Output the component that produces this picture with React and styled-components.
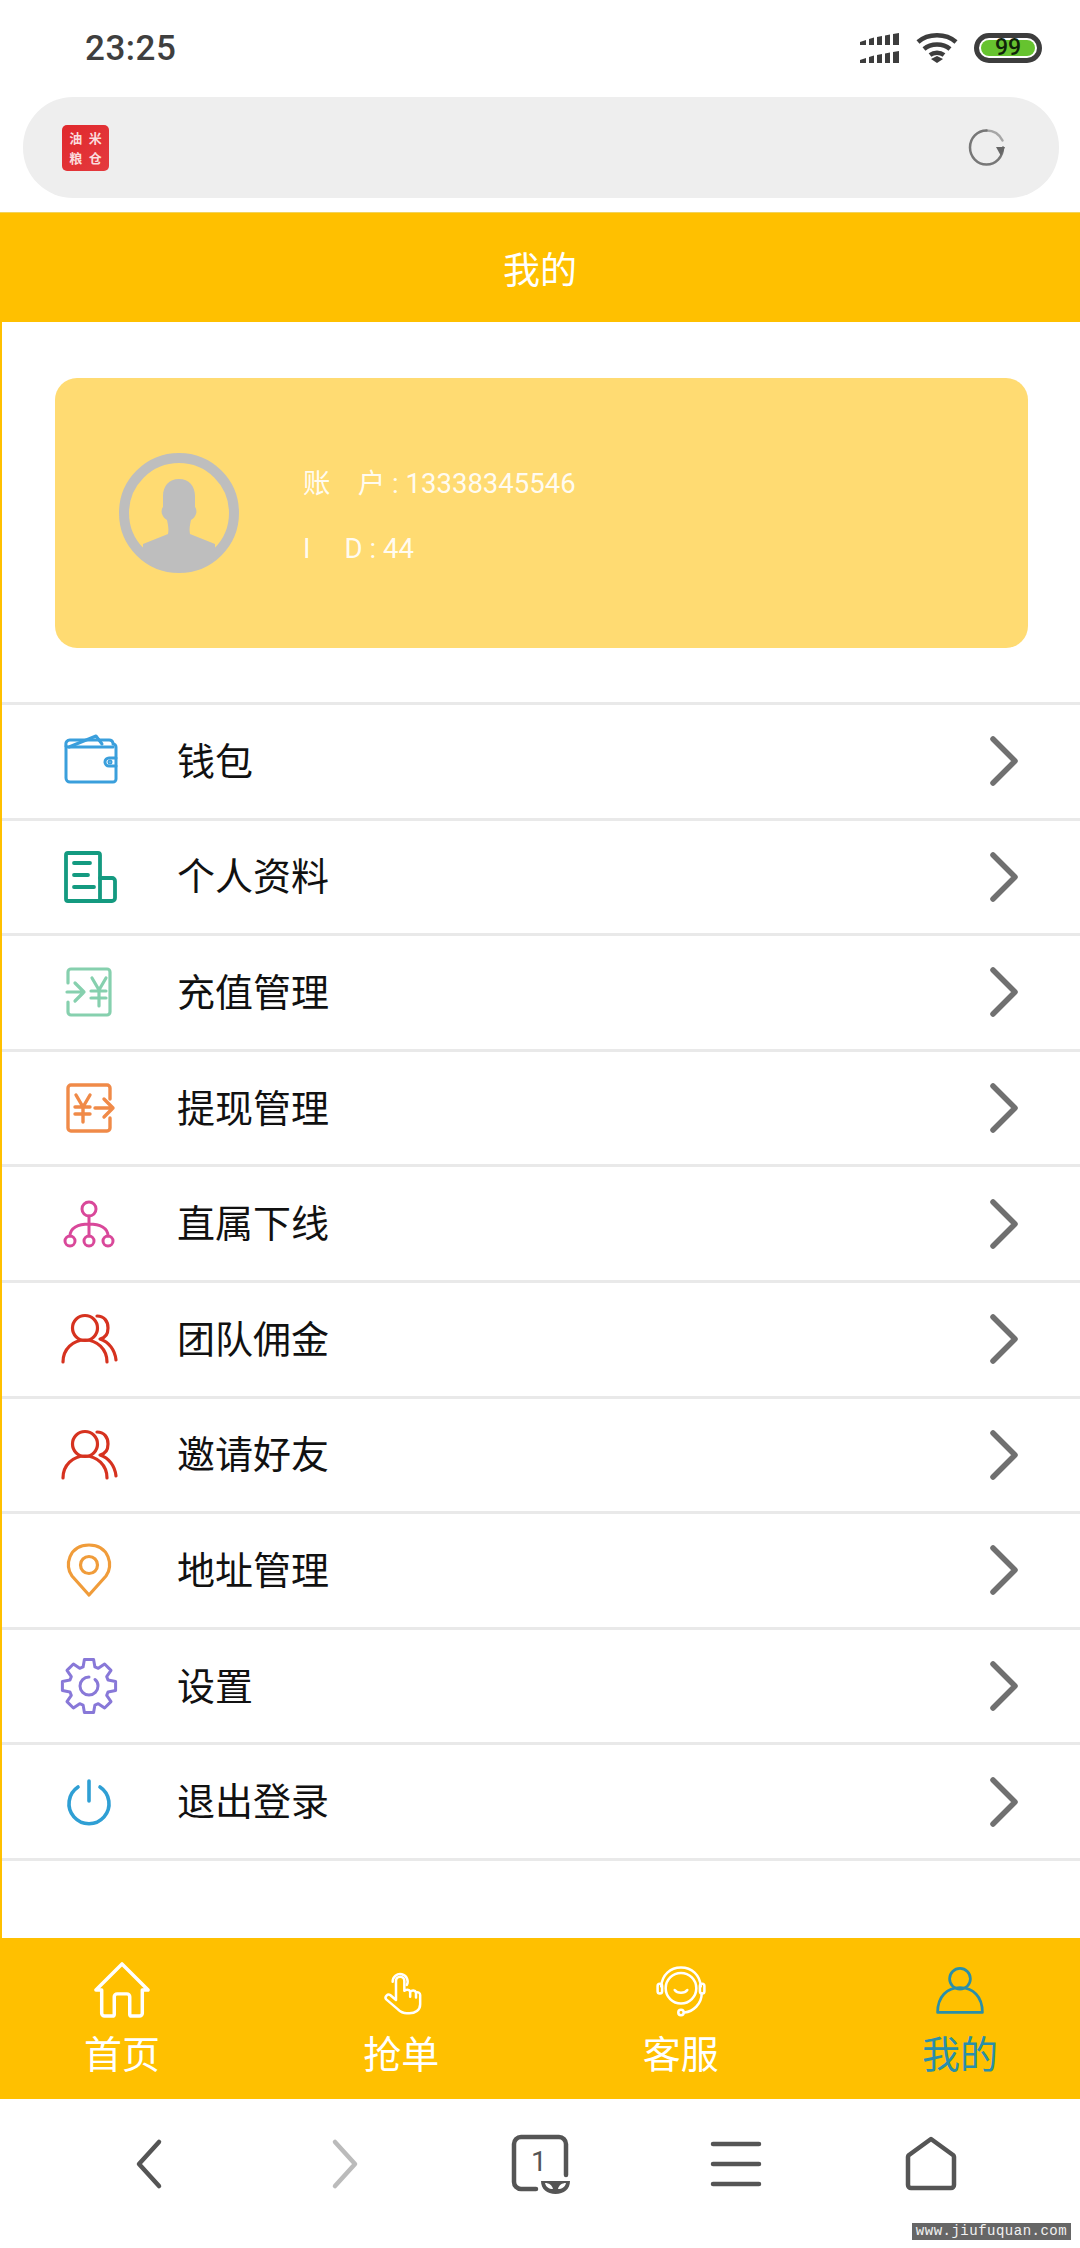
import React from 'react';
import styled, { createGlobalStyle } from 'styled-components';

const YELLOW = '#ffc000';

const GlobalStyle = createGlobalStyle`
    html, body {
        margin: 0;
        padding: 0;
        background: #fff;
    }
    * {
        box-sizing: border-box;
    }
`;

const Page = styled.div`
    position: relative;
    width: 1080px;
    height: 2248px;
    display: flex;
    flex-direction: column;
    overflow: hidden;
    background: #fff;
    font-family: "Noto Sans CJK SC", "Noto Sans", sans-serif;
`;

const StatusBar = styled.div`
    height: 97px;
    flex: none;
    display: flex;
    align-items: flex-start;
    justify-content: space-between;
    padding: 33px 38px 0 85px;
`;

const Clock = styled.span`
    font-family: Roboto, sans-serif;
    font-weight: 500;
    font-size: 35px;
    line-height: 32px;
    letter-spacing: 0.5px;
    color: #3f3f3f;
`;

const StatusIcons = styled.div`
    display: flex;
    align-items: center;
    gap: 16px;
    height: 30px;
`;

const Battery = styled.div`
    width: 68px;
    height: 30px;
    border: 5px solid #3d3d3d;
    border-radius: 15px;
    padding: 2px;
    background: #fff;
    display: flex;
`;

const BatteryFill = styled.div`
    flex: 1;
    border-radius: 8px;
    background: #66c32f;
    display: flex;
    align-items: center;
    justify-content: center;
    font-family: Roboto, sans-serif;
    font-weight: 500;
    font-size: 23px;
    line-height: 16px;
    color: #10240a;
`;

const AddressBar = styled.div`
    height: 101px;
    flex: none;
    margin: 0 21px 14px 23px;
    padding: 0 54px 0 39px;
    border-radius: 50px;
    background: #eeeeee;
    display: flex;
    align-items: center;
    justify-content: space-between;
`;

const SiteLogo = styled.div`
    width: 47px;
    height: 46px;
    border-radius: 5px;
    background: linear-gradient(135deg, #e0282c, #e43a3e);
    display: grid;
    grid-template-columns: 1fr 1fr;
    place-items: center;
    padding: 3px 4px;
    font-family: "Noto Sans CJK SC", sans-serif;
    font-weight: 700;
    font-size: 13px;
    line-height: 16px;
    color: #fbdcdc;
`;

const Header = styled.div`
    height: 110px;
    flex: none;
    background: ${YELLOW};
    border-top: 1px solid #f2d35c;
    display: flex;
    align-items: center;
    justify-content: center;
    font-size: 37px;
    color: #fff;
`;

const Main = styled.div`
    flex: 1;
    min-height: 0;
    border-left: 2px solid ${YELLOW};
    padding-top: 56px;
`;

const ProfileCard = styled.div`
    height: 270px;
    margin: 0 52px 0 53px;
    padding-left: 64px;
    border-radius: 22px;
    background: #ffdb72;
    display: flex;
    align-items: center;
    gap: 64px;
`;

const ProfileInfo = styled.div`
    display: flex;
    flex-direction: column;
    gap: 25px;
    padding-top: 6px;
    font-family: Roboto, "Noto Sans CJK SC", sans-serif;
    font-size: 27.5px;
    line-height: 40px;
    color: rgba(255, 255, 255, 0.92);
    white-space: pre;
`;

const MenuList = styled.div`
    margin-top: 54px;
    border-top: 3px solid #e9e9e9;
`;

const MenuRow = styled.div`
    height: 115.6px;
    display: flex;
    align-items: center;
    padding: 0 62px 0 57px;
    border-bottom: 3px solid #e9e9e9;
`;

const MenuIcon = styled.div`
    width: 60px;
    height: 60px;
    flex: none;
    svg {
        display: block;
    }
`;

const MenuLabel = styled.span`
    flex: 1;
    margin-left: 58px;
    padding-bottom: 5px;
    font-size: 38px;
    line-height: 50px;
    color: #111;
`;

const TabBar = styled.div`
    height: 161px;
    flex: none;
    background: ${YELLOW};
    display: flex;
    justify-content: space-between;
    padding: 22px 60px 0 62px;
`;

const TabItem = styled.div`
    width: 120px;
    display: flex;
    flex-direction: column;
    align-items: center;
    color: ${(p) => (p.$active ? '#2a8fa9' : '#fff')};
`;

const TabIcon = styled.div`
    width: 60px;
    height: 60px;
    display: flex;
    align-items: center;
    justify-content: center;
    svg {
        display: block;
    }
`;

const TabLabel = styled.span`
    margin-top: 7px;
    font-size: 38px;
    line-height: 50px;
`;

const BottomNav = styled.div`
    height: 149px;
    flex: none;
    display: flex;
    justify-content: space-between;
    padding: 35px 119px 0 119px;
`;

const NavButton = styled.div`
    width: 60px;
    height: 60px;
    position: relative;
    svg {
        display: block;
    }
`;

const TabCount = styled.span`
    position: absolute;
    left: 21px;
    top: 12px;
    font-family: Roboto, sans-serif;
    font-size: 28px;
    line-height: 32px;
    color: #555;
`;

const Watermark = styled.div`
    position: absolute;
    left: 912px;
    top: 2223px;
    width: 159px;
    height: 17px;
    background: #666;
    color: #f2f2f2;
    font-family: "Liberation Mono", monospace;
    font-size: 14px;
    line-height: 17px;
    letter-spacing: 0.5px;
    text-align: center;
    white-space: nowrap;
`;

const Svg = ({ size = 60, color, sw = 3, children }) => (
    <svg
        width={size}
        height={size}
        viewBox="0 0 60 60"
        fill="none"
        stroke={color}
        strokeWidth={sw}
        strokeLinecap="round"
        strokeLinejoin="round"
    >
        {children}
    </svg>
);

const SignalIcon = () => (
    <svg width="40" height="31" viewBox="0 0 40 31" fill="#3d3d3d">
        <path d="M0 9l6-2v5H0zM9 6l5-1.500V12H9zM17 4l5-1v9h-5zM25 2.500l5-1V12h-5zM33 1l6-1v12h-6z" />
        <path d="M0 27l6-2v5H0zM9 24l5-1.500V30H9zM17 22l5-1v9h-5zM25 20.500l5-1V30h-5zM33 19l6-1v12h-6z" />
    </svg>
);

const WifiIcon = () => (
    <svg width="42" height="30" viewBox="0 0 42 30" fill="none" stroke="#3d3d3d" strokeWidth="4.500">
        <path d="M2 9C12 0 30 0 40 9" />
        <path d="M8 16c7-6 19-6 26 0" />
        <path d="M14 22c4-3 10-3 14 0" />
        <path d="M15 26l6-3 6 3-6 4z" fill="#3d3d3d" stroke="none" />
    </svg>
);

const RefreshIcon = () => (
    <svg width="37" height="37" viewBox="0 0 37 37" fill="none">
        <path d="M35 18.500A16.500 17 0 1 1 18.500 1.500" stroke="#777" strokeWidth="2.500" strokeLinecap="round" />
        <path d="M18.500 1.500c7 0 13 4 16 10" stroke="#777" strokeWidth="2.500" strokeLinecap="round" opacity="0.6" />
        <path d="M28 18h9l-4 9z" fill="#666" />
    </svg>
);

const Avatar = () => (
    <svg width="120" height="120" viewBox="0 0 120 120">
        <defs>
            <clipPath id="avatar-clip">
                <circle cx="60" cy="60" r="58" />
            </clipPath>
        </defs>
        <circle cx="60" cy="60" r="55" fill="#ffdb72" stroke="#bebebe" strokeWidth="10" />
        <path
            clipPath="url(#avatar-clip)"
            fill="#bebebe"
            d="M60 26c-10 0-16 7-16 17v11c-1 1-2 4-1 7 1 3 3 5 5 6 1 5 2 9 1 14l-25 10v20h72V91L71 81c-1-5 0-9 1-14 2-1 4-3 5-6 1-3 0-6-1-7V43c0-10-6-17-16-17z"
        />
    </svg>
);

const WalletIcon = ({ color }) => (
    <Svg color={color} sw={3}>
        <path d="M7 14v33a4 4 0 0 0 4 4h43a3 3 0 0 0 3-3V16a3 3 0 0 0-3-3V12a4 4 0 0 0-4-3H11a4 4 0 0 0-4 5z" />
        <path d="M7 15c0 1 1 1 3 1l27-11 6 8" />
        <path d="M10 16h44" />
        <path d="M57 27h-7a4 4 0 0 0 0 8h7" />
        <circle cx="51" cy="31" r="1" />
    </Svg>
);

const DocIcon = ({ color }) => (
    <Svg color={color} sw={3.8}>
        <path d="M41 54H9a2 2 0 0 1-2-2V8a2 2 0 0 1 2-2h30a2 2 0 0 1 2 2z" />
        <path d="M41 31h12a3 3 0 0 1 3 3v17a3 3 0 0 1-3 3H41" />
        <path d="M15 16h16M15 28h14M15 40h20" />
    </Svg>
);

const RechargeIcon = ({ color }) => (
    <Svg color={color} sw={3.2}>
        <path d="M9 21V10a3 3 0 0 1 3-3h36a3 3 0 0 1 3 3v40a3 3 0 0 1-3 3H12a3 3 0 0 1-3-3V40" />
        <path d="M8 30h17M16 21l9 9-9 9" />
        <path d="M33 16l7 12 7-12M32 29h15M32 36h15M40 28v16" />
    </Svg>
);

const WithdrawIcon = ({ color }) => (
    <Svg color={color} sw={3.4}>
        <path d="M51 21V10a3 3 0 0 0-3-3H12a3 3 0 0 0-3 3v40a3 3 0 0 0 3 3h36a3 3 0 0 0 3-3V40" />
        <path d="M36 30h18M45 21l9 9-9 9" />
        <path d="M17 17l7 12 7-12M16 29h15M16 36h15M24 29v15" />
    </Svg>
);

const TreeIcon = ({ color }) => (
    <Svg color={color} sw={3}>
        <circle cx="30" cy="15" r="7" />
        <circle cx="11" cy="47" r="5" />
        <circle cx="30" cy="47" r="5" />
        <circle cx="49" cy="47" r="5" />
        <path d="M30 22v20M11 42c0-8 8-12 19-12s19 4 19 12" />
    </Svg>
);

const PeopleIcon = ({ color }) => (
    <Svg color={color} sw={3.2}>
        <circle cx="26" cy="19" r="12.500" />
        <path d="M4 53c0-13 10-22 22-22s22 9 22 22" />
        <path d="M38 7c7 0 11 5 11 12 0 6-3 10-8 11 9 3 15 11 16 21" />
    </Svg>
);

const PinIcon = ({ color }) => (
    <Svg color={color} sw={3.2}>
        <path d="M30 55L13 36C5 26 10 5 30 5s25 21 17 31z" />
        <circle cx="30" cy="25" r="8.500" />
    </Svg>
);

// 8 tooth outline, worked out around the centre
const gearPath = (() => {
    const point = (r, a) => `${(30 + r * Math.cos(a)).toFixed(1)} ${(30 + r * Math.sin(a)).toFixed(1)}`;
    const step = Math.PI / 4;
    let d = '';
    for (let i = 0; i < 8; i++) {
        const a = i * step - Math.PI / 2;
        d += `${i ? 'L' : 'M'}${point(20, a - 0.3)}L${point(27, a - 0.17)}L${point(27, a + 0.17)}L${point(20, a + 0.3)}`;
    }
    return d + 'Z';
})();

const GearIcon = ({ color }) => (
    <Svg color={color} sw={3}>
        <path d={gearPath} />
        <path d="M30 21a9 9 0 1 0 9 9c0-3-1-5-3-6.500" />
    </Svg>
);

const PowerIcon = ({ color }) => (
    <Svg color={color} sw={3.6}>
        <path d="M30 9v20" />
        <path d="M19 15a20 20 0 1 0 22 0" />
    </Svg>
);

const menuItems = [
    { label: '钱包', icon: WalletIcon, color: '#3a9fdc' },
    { label: '个人资料', icon: DocIcon, color: '#149a80' },
    { label: '充值管理', icon: RechargeIcon, color: '#86d0ae' },
    { label: '提现管理', icon: WithdrawIcon, color: '#f08a48' },
    { label: '直属下线', icon: TreeIcon, color: '#d9489a' },
    { label: '团队佣金', icon: PeopleIcon, color: '#d6321f' },
    { label: '邀请好友', icon: PeopleIcon, color: '#d6321f' },
    { label: '地址管理', icon: PinIcon, color: '#f09c3a' },
    { label: '设置', icon: GearIcon, color: '#8878d8' },
    { label: '退出登录', icon: PowerIcon, color: '#2f9fd4' },
];

const Chevron = () => (
    <svg width="28" height="50" viewBox="0 0 28 50" fill="none" stroke="#707070" strokeWidth="5.500" strokeLinecap="round" strokeLinejoin="round">
        <path d="M3 3l22 22L3 47" />
    </svg>
);

const HomeIcon = () => (
    <Svg size={58} color="#fff" sw={3.6}>
        <path d="M3 30L30 3l27 27h-6v24a3 3 0 0 1-3 3h-8a2 2 0 0 1-2-2V37a3 3 0 0 0-3-3h-10a3 3 0 0 0-3 3v18a2 2 0 0 1-2 2h-8a3 3 0 0 1-3-3V30z" />
    </Svg>
);

const HandIcon = () => (
    <Svg size={50} color="#fff" sw={3}>
        <path d="M24 19a5 5 0 0 1 10 0v12c2-2 6-2 7 1 2-2 6-2 7 1 2-1 5 0 5 3v11c0 7-6 11-13 11h-3c-5 0-8-2-11-5L12 41c-2-3 2-7 5-5l7 6z" />
        <path d="M20 20a9 9 0 1 1 17 4" />
        <path d="M41 32v6M48 33v6" />
    </Svg>
);

const HeadsetIcon = () => (
    <Svg size={54} color="#fff" sw={2.8}>
        <path d="M8 26C9 13 18 5 30 5s21 8 22 21" />
        <circle cx="30" cy="28" r="17" />
        <path d="M23 30c3 4 11 4 14 0" />
        <rect x="4" y="23" width="5" height="11" rx="2.500" />
        <rect x="51" y="23" width="5" height="11" rx="2.500" />
        <path d="M53 34c0 12-10 20-19 21" />
        <circle cx="30" cy="55" r="3" />
    </Svg>
);

const PersonIcon = () => (
    <Svg size={48} color="#2a8fa9" sw={3.4}>
        <circle cx="30" cy="16" r="13" />
        <path d="M2 58c0-20 12-31 28-31s28 11 28 31z" />
    </Svg>
);

const BackIcon = ({ color, flip }) => (
    <svg width="60" height="60" viewBox="0 0 60 60" fill="none" stroke={color} strokeWidth="4.500" strokeLinecap="round" strokeLinejoin="round">
        <path d={flip ? 'M20 8l20 22-20 22' : 'M40 8L20 30l20 22'} />
    </svg>
);

const TabsIcon = () => (
    <svg width="60" height="60" viewBox="0 0 60 60" fill="none" stroke="#555" strokeWidth="4.500" strokeLinecap="round" strokeLinejoin="round">
        <path d="M26 55H11a7 7 0 0 1-7-7V10a7 7 0 0 1 7-7h38a7 7 0 0 1 7 7v31" />
        <path d="M31 47h29c0 8-6 13-14.500 13S31 55 31 47z" fill="#555" stroke="none" />
        <path d="M35 49c4 0 7 2 8 6-4 0-7-2-8-6zM56 49c-4 0-7 2-8 6 4 0 7-2 8-6z" fill="#fff" stroke="none" />
    </svg>
);

const MenuIconLines = () => (
    <svg width="60" height="60" viewBox="0 0 60 60" fill="none" stroke="#555" strokeWidth="4.500" strokeLinecap="round">
        <path d="M7 10h46M7 30h46M7 50h46" />
    </svg>
);

const HomeNavIcon = () => (
    <svg width="60" height="60" viewBox="0 0 60 60" fill="none" stroke="#555" strokeWidth="4.500" strokeLinecap="round" strokeLinejoin="round">
        <path d="M30 5L52 21a3 3 0 0 1 1 2v28a3 3 0 0 1-3 3H10a3 3 0 0 1-3-3V23a3 3 0 0 1 1-2z" />
    </svg>
);

export default function App() {
    return (
        <Page>
            <GlobalStyle />
            <StatusBar>
                <Clock>23:25</Clock>
                <StatusIcons>
                    <SignalIcon />
                    <WifiIcon />
                    <Battery>
                        <BatteryFill>99</BatteryFill>
                    </Battery>
                </StatusIcons>
            </StatusBar>
            <AddressBar>
                <SiteLogo>
                    <span>油</span>
                    <span>米</span>
                    <span>粮</span>
                    <span>仓</span>
                </SiteLogo>
                <RefreshIcon />
            </AddressBar>
            <Header>我的</Header>
            <Main>
                <ProfileCard>
                    <Avatar />
                    <ProfileInfo>
                        <span>{'账\u00a0\u00a0\u00a0\u00a0户 : 13338345546'}</span>
                        <span>{'I\u00a0\u00a0\u00a0\u00a0\u00a0D : 44'}</span>
                    </ProfileInfo>
                </ProfileCard>
                <MenuList>
                    {menuItems.map((item) => (
                        <MenuRow key={item.label}>
                            <MenuIcon>
                                <item.icon color={item.color} />
                            </MenuIcon>
                            <MenuLabel>{item.label}</MenuLabel>
                            <Chevron />
                        </MenuRow>
                    ))}
                </MenuList>
            </Main>
            <TabBar>
                <TabItem>
                    <TabIcon><HomeIcon /></TabIcon>
                    <TabLabel>首页</TabLabel>
                </TabItem>
                <TabItem>
                    <TabIcon><HandIcon /></TabIcon>
                    <TabLabel>抢单</TabLabel>
                </TabItem>
                <TabItem>
                    <TabIcon><HeadsetIcon /></TabIcon>
                    <TabLabel>客服</TabLabel>
                </TabItem>
                <TabItem $active>
                    <TabIcon><PersonIcon /></TabIcon>
                    <TabLabel>我的</TabLabel>
                </TabItem>
            </TabBar>
            <BottomNav>
                <NavButton><BackIcon color="#555" /></NavButton>
                <NavButton><BackIcon color="#bbb" flip /></NavButton>
                <NavButton>
                    <TabsIcon />
                    <TabCount>1</TabCount>
                </NavButton>
                <NavButton><MenuIconLines /></NavButton>
                <NavButton><HomeNavIcon /></NavButton>
            </BottomNav>
            <Watermark>www.jiufuquan.com</Watermark>
        </Page>
    );
}
